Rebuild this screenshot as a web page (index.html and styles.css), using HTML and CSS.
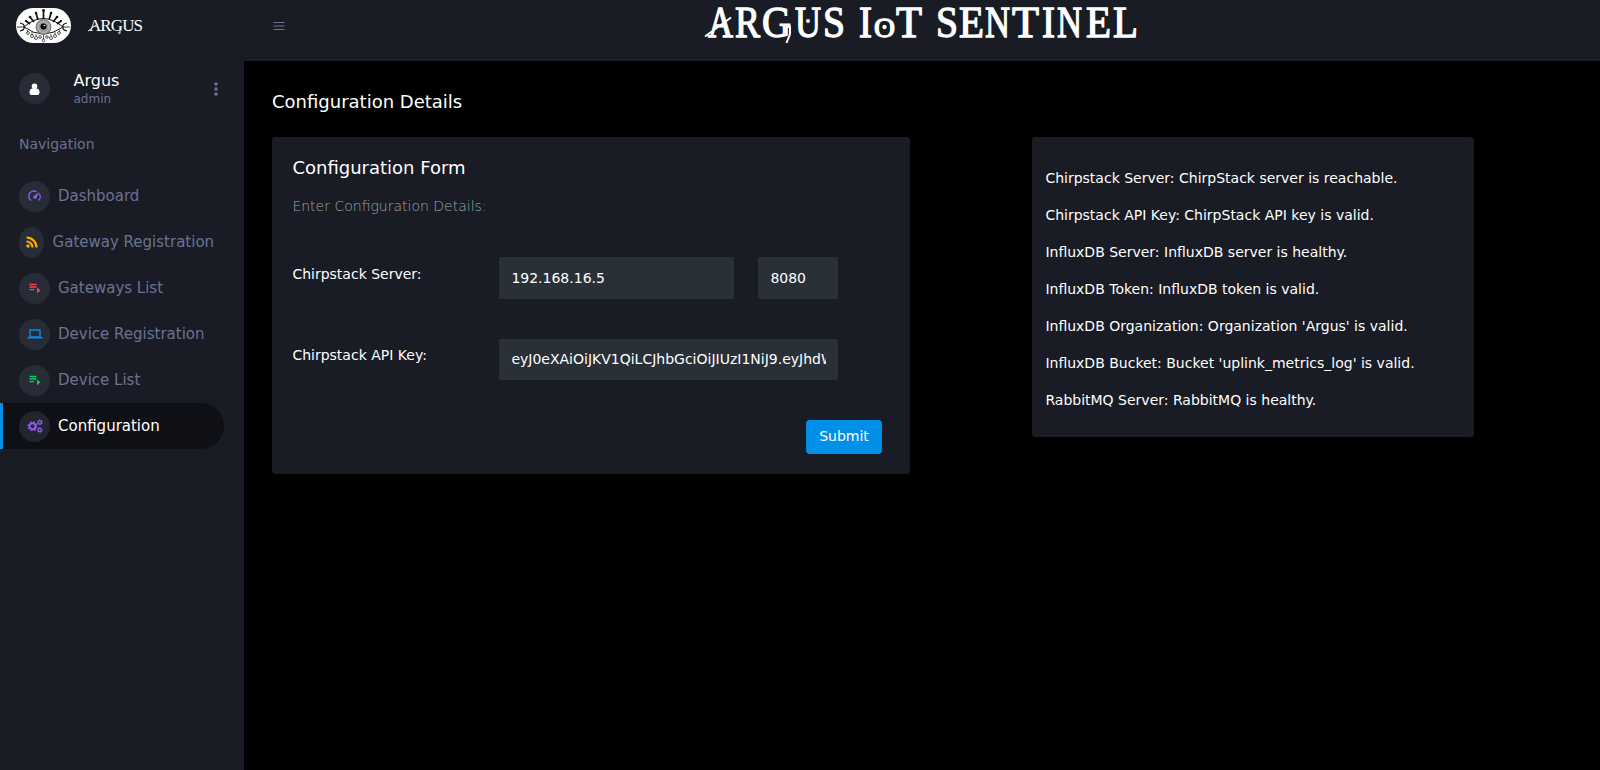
FILE: index.html
```html
<!DOCTYPE html>
<html lang="en">
<head>
<meta charset="utf-8">
<title>Argus IoT Sentinel</title>
<link rel="stylesheet" href="styles.css">
</head>
<body>
<div class="app">
  <aside class="sidebar">
    <div class="brand">
      <svg class="brand-eye" viewBox="0 0 55 35">
        <rect width="55" height="35" rx="17.5" fill="#fff"/>
        <g fill="none" stroke="#111" stroke-width="1">
          <path d="M8 19Q27 2 47 19Q27 33 8 19Z" fill="#fff"/>
          <path d="M1 19H9M46 19H54" stroke-width=".8"/>
          <path d="M4 15Q9 16 8 19Q9 22 4 23M51 15Q46 16 47 19Q46 22 51 23" stroke-width="1.2"/>
          <path d="M10 13L14 16M14 9L18 14M20 5L22 12M27.500 2V11M35 5L33 12M41 9L37 14M45 13L41 16" stroke-width="1.7"/>
          <g stroke-width=".7"><circle cx="12" cy="25" r="1.400"/><circle cx="16" cy="28" r="1.500"/><circle cx="20" cy="30" r="1.500"/><circle cx="24" cy="29" r="1.300"/><circle cx="27.500" cy="32.500" r="1.300"/><circle cx="31" cy="29" r="1.300"/><circle cx="35" cy="30" r="1.500"/><circle cx="39" cy="28" r="1.500"/><circle cx="43" cy="25" r="1.400"/>
          <path d="M11 22L12 24M16 24V27M20 26V28M27.500 27V31M35 26V28M39 24V27M44 22L43 24"/></g>
        </g>
        <g fill="#111"><circle cx="14" cy="9" r="1.300"/><circle cx="20" cy="5" r="1.300"/><circle cx="27.500" cy="2.500" r="1.400"/><circle cx="35" cy="5" r="1.300"/><circle cx="41" cy="9" r="1.300"/><circle cx="10" cy="13" r="1.100"/><circle cx="45" cy="13" r="1.100"/></g>
        <circle cx="27.500" cy="19" r="7.500" fill="#999" stroke="#555" stroke-width=".7"/>
        <circle cx="27.500" cy="19" r="5.500" fill="none" stroke="#ccc" stroke-width=".6"/>
        <circle cx="27.500" cy="18.500" r="3" fill="#080808"/><circle cx="28.500" cy="17.500" r=".8" fill="#fff"/>
      </svg>
      <svg class="brand-word" viewBox="0 0 57 24">
        <text x="2" y="17" textLength="54" lengthAdjust="spacing">ARGUS</text>
        <path d="M1 17L9 11M33 13V19.500L31 18.500" fill="none" stroke="#fff" stroke-width=".9"/>
      </svg>
    </div>
    <div class="profile">
      <span class="disc"><svg width="12" height="14" viewBox="0 0 12 14"><circle cx="5.500" cy="4.200" r="2.800" fill="#fff"/><path d="M.5 10.500Q.5 6.500 3.500 6.500H7.500Q10.500 6.500 10.500 10.500Q10.500 13 8.500 13H2.500Q.5 13 .5 10.500Z" fill="#fff"/></svg></span>
      <div class="who"><div class="name">Argus</div><div class="role">admin</div></div>
      <svg class="dots" width="4" height="14" viewBox="0 0 4 14"><circle cx="2" cy="2" r="1.800"/><circle cx="2" cy="7" r="1.800"/><circle cx="2" cy="12" r="1.800"/></svg>
    </div>
    <div class="nav-head">Navigation</div>
    <nav>
      <a class="item"><span class="disc"><svg width="14" height="14" viewBox="0 0 14 14"><path d="M3.200 11.500A5 5 0 0 1 8.600 2.700M11 4.500A5 5 0 0 1 10.500 11.500" fill="none" stroke="#8f5fe8" stroke-width="1.400"/><path d="M10.800 3L8.500 9A1.600 1.600 0 0 1 5.400 7.500Z" fill="#8f5fe8"/></svg></span><span>Dashboard</span></a>
      <a class="item gateway"><span class="disc narrow"><svg width="14" height="14" viewBox="0 0 14 14"><circle cx="3" cy="11" r="1.700" fill="#ffab00"/><path d="M1.500 6.500A6 6 0 0 1 7.500 12.500M1.500 2.500A10 10 0 0 1 11.500 12.500" fill="none" stroke="#ffab00" stroke-width="2.200"/></svg></span><span>Gateway Registration</span></a>
      <a class="item"><span class="disc"><svg class="red" width="14" height="14" viewBox="0 0 14 14"><path d="M1.500 3.500H8.500M1.500 6H8.500M1.500 8.600H6.200" stroke="currentColor" stroke-width="1.400"/><path d="M9 6.500L12.500 9.300L9 12.300Z" fill="currentColor"/></svg></span><span>Gateways List</span></a>
      <a class="item"><span class="disc"><svg width="16" height="14" viewBox="0 0 16 14"><path d="M3 3H13V10H3Z" fill="none" stroke="#0090e7" stroke-width="1.300"/><path d="M.5 10H15.500V11.500H.5Z" fill="#0090e7"/></svg></span><span>Device Registration</span></a>
      <a class="item"><span class="disc"><svg class="green" width="14" height="14" viewBox="0 0 14 14"><path d="M1.500 3.500H8.500M1.500 6H8.500M1.500 8.600H6.200" stroke="currentColor" stroke-width="1.400"/><path d="M9 6.500L12.500 9.300L9 12.300Z" fill="currentColor"/></svg></span><span>Device List</span></a>
      <a class="item active"><span class="disc"><svg width="16" height="14" viewBox="0 0 16 14"><g fill="none" stroke="#8f5fe8"><circle cx="5.500" cy="7.200" r="3" stroke-width="1.900"/><circle cx="5.500" cy="7.200" r="4.400" stroke-width="1.400" stroke-dasharray="1.728"/><circle cx="12.800" cy="3.400" r="1.700" stroke-width="1.300"/><circle cx="12.800" cy="3.400" r="2.500" stroke-width=".8" stroke-dasharray="1.309"/><circle cx="12.800" cy="11" r="1.700" stroke-width="1.300"/><circle cx="12.800" cy="11" r="2.500" stroke-width=".8" stroke-dasharray="1.309"/></g></svg></span><span>Configuration</span></a>
    </nav>
  </aside>
  <div class="page">
    <header class="topbar">
      <svg class="burger" width="12" height="10" viewBox="0 0 12 10"><path d="M.5 1.500H11.500M.5 5H11.500M.5 8.500H11.500" stroke="#6c7293" stroke-width="1.200"/></svg>
      <svg class="wordmark" width="440" height="50" viewBox="0 0 440 50">
        <text x="8" y="36.500" textLength="25" lengthAdjust="spacingAndGlyphs">A</text>
        <text x="35" y="36.500" textLength="25" lengthAdjust="spacingAndGlyphs">R</text>
        <text x="62" y="36.500" textLength="29" lengthAdjust="spacingAndGlyphs">G</text>
        <text x="95" y="36.500" textLength="26" lengthAdjust="spacingAndGlyphs">U</text>
        <text x="123" y="36.500" textLength="22" lengthAdjust="spacingAndGlyphs">S</text>
        <text x="159" y="36.500" textLength="13" lengthAdjust="spacingAndGlyphs">I</text>
        <text class="small-o" x="174" y="36.500" textLength="21" lengthAdjust="spacingAndGlyphs">O</text>
        <text x="196" y="36.500" textLength="26" lengthAdjust="spacingAndGlyphs">T</text>
        <text x="236" y="36.500" textLength="22" lengthAdjust="spacingAndGlyphs">S</text>
        <text x="259" y="36.500" textLength="25" lengthAdjust="spacingAndGlyphs">E</text>
        <text x="285" y="36.500" textLength="25" lengthAdjust="spacingAndGlyphs">N</text>
        <text x="312" y="36.500" textLength="27" lengthAdjust="spacingAndGlyphs">T</text>
        <text x="342" y="36.500" textLength="13" lengthAdjust="spacingAndGlyphs">I</text>
        <text x="357" y="36.500" textLength="25" lengthAdjust="spacingAndGlyphs">N</text>
        <text x="386" y="36.500" textLength="25" lengthAdjust="spacingAndGlyphs">E</text>
        <text x="413" y="36.500" textLength="25" lengthAdjust="spacingAndGlyphs">L</text>
        <path d="M5 36.500L31 17.500M86 27H90V34L86.500 43" fill="none" stroke="#fff" stroke-width="2"/>
        <circle cx="108" cy="21" r="2" fill="#fff"/><circle cx="184.500" cy="27" r="2.200" fill="#fff"/>
      </svg>
    </header>
    <main class="content">
      <h3 class="page-title">Configuration Details</h3>
      <div class="cards">
        <form class="card form-card">
          <h4 class="card-title">Configuration Form</h4>
          <p class="hint">Enter Configuration Details:</p>
          <div class="row first"><label>Chirpstack Server:</label><input class="host" value="192.168.16.5"><input class="port" value="8080"></div>
          <div class="row second"><label>Chirpstack API Key:</label><input class="key" value="eyJ0eXAiOiJKV1QiLCJhbGciOiJIUzI1NiJ9.eyJhdWQiOiJjaGlycHN0YWNr"></div>
          <div class="actions"><button type="button">Submit</button></div>
        </form>
        <section class="card status">
          <p>Chirpstack Server: ChirpStack server is reachable.</p>
          <p>Chirpstack API Key: ChirpStack API key is valid.</p>
          <p>InfluxDB Server: InfluxDB server is healthy.</p>
          <p>InfluxDB Token: InfluxDB token is valid.</p>
          <p>InfluxDB Organization: Organization 'Argus' is valid.</p>
          <p>InfluxDB Bucket: Bucket 'uplink_metrics_log' is valid.</p>
          <p>RabbitMQ Server: RabbitMQ is healthy.</p>
        </section>
      </div>
    </main>
  </div>
</div>
</body>
</html>
```
FILE: styles.css
```css
* { box-sizing: border-box; }
body { margin: 0; background: #000; color: #fff; font: 14px/21px "DejaVu Sans", sans-serif; }
h3, h4, p { margin: 0; font-weight: 400; }
svg { display: block; flex-shrink: 0; overflow: visible; }
.app { display: flex; height: 770px; overflow: hidden; }
.sidebar { width: 244px; flex-shrink: 0; background: #191c24; }
.brand { display: flex; height: 61px; padding: 8px 0 0 16px; gap: 16px; }
.brand-eye { width: 55px; height: 35px; }
.brand-word { width: 57px; height: 24px; margin-top: 6px; }
.brand-word text { font: 17px "Liberation Serif", serif; fill: #fff; }
.profile { display: flex; align-items: center; height: 55px; padding: 0 26.5px 0 19px; }
.who { flex: 1; padding: 2px 0 0 23.5px; }
.name { font-size: 16px; line-height: 19px; }
.role { font-size: 12px; line-height: 18px; color: #6c7293; }
.dots { fill: #6c7293; }
.nav-head { padding: 18px 0 0 19px; height: 57px; color: #6c7293; }
.disc { display: flex; align-items: center; justify-content: center; width: 31px; height: 31px; flex-shrink: 0; border-radius: 50%; background: #282c37; }
.narrow { width: 25px; }
.item { display: flex; align-items: center; gap: 8px; width: 224px; height: 46px; padding-left: 19px; font-size: 15px; color: #6c7293; white-space: nowrap; }
.gateway { gap: 8.6px; }
.active { padding-left: 16px; border-left: 3px solid #0090e7; border-radius: 0 23px 23px 0; background: #0f1015; color: #fff; }
.active .disc { background: #22242e; }
.red { color: #fc424a; }
.green { color: #00d25b; }
.page { flex: 1; }
.topbar { display: flex; height: 61px; padding-left: 28px; background: #191c24; }
.burger { margin: 20.5px 0 0 .5px; }
.wordmark { margin-left: 415.5px; }
.wordmark text { font: 43.5px "Liberation Serif", serif; fill: #fff; stroke: #fff; stroke-width: 1.3px; }
.wordmark .small-o { font-size: 28px; }
.content { padding: 28px 0 0 28px; }
.page-title { font-size: 18px; line-height: 26px; height: 48px; }
.cards { display: flex; align-items: flex-start; gap: 122px; }
.card { background: #191c24; border-radius: 4px; }
.form-card { width: 638px; height: 337px; padding: 18px 28px 20px 20.4px; }
.card-title { font-size: 18px; line-height: 26px; }
.hint { margin-top: 15px; font-weight: 300; color: #a0a3aa; }
.row { display: flex; }
.row label { width: 206.6px; padding-top: 7px; }
.first { margin-top: 40px; }
.second { margin-top: 40px; }
input { height: 42px; padding: 0 12.4px; border: 0; border-radius: 2px; background: #2a3038; color: #fff; font: inherit; }
.host { width: 235px; }
.port { width: 80px; margin-left: 24px; }
.key { width: 339px; height: 41px; padding-bottom: 1px; }
.second label { padding-top: 6px; }
.actions { display: flex; justify-content: flex-end; margin-top: 40px; }
button { width: 76px; height: 34px; padding: 0 0 2px; border: 0; border-radius: 4px; background: #0090e7; color: #fff; font: inherit; }
.status { display: flex; flex-direction: column; gap: 16px; width: 442px; height: 300px; padding: 31px 13.4px; }
```
